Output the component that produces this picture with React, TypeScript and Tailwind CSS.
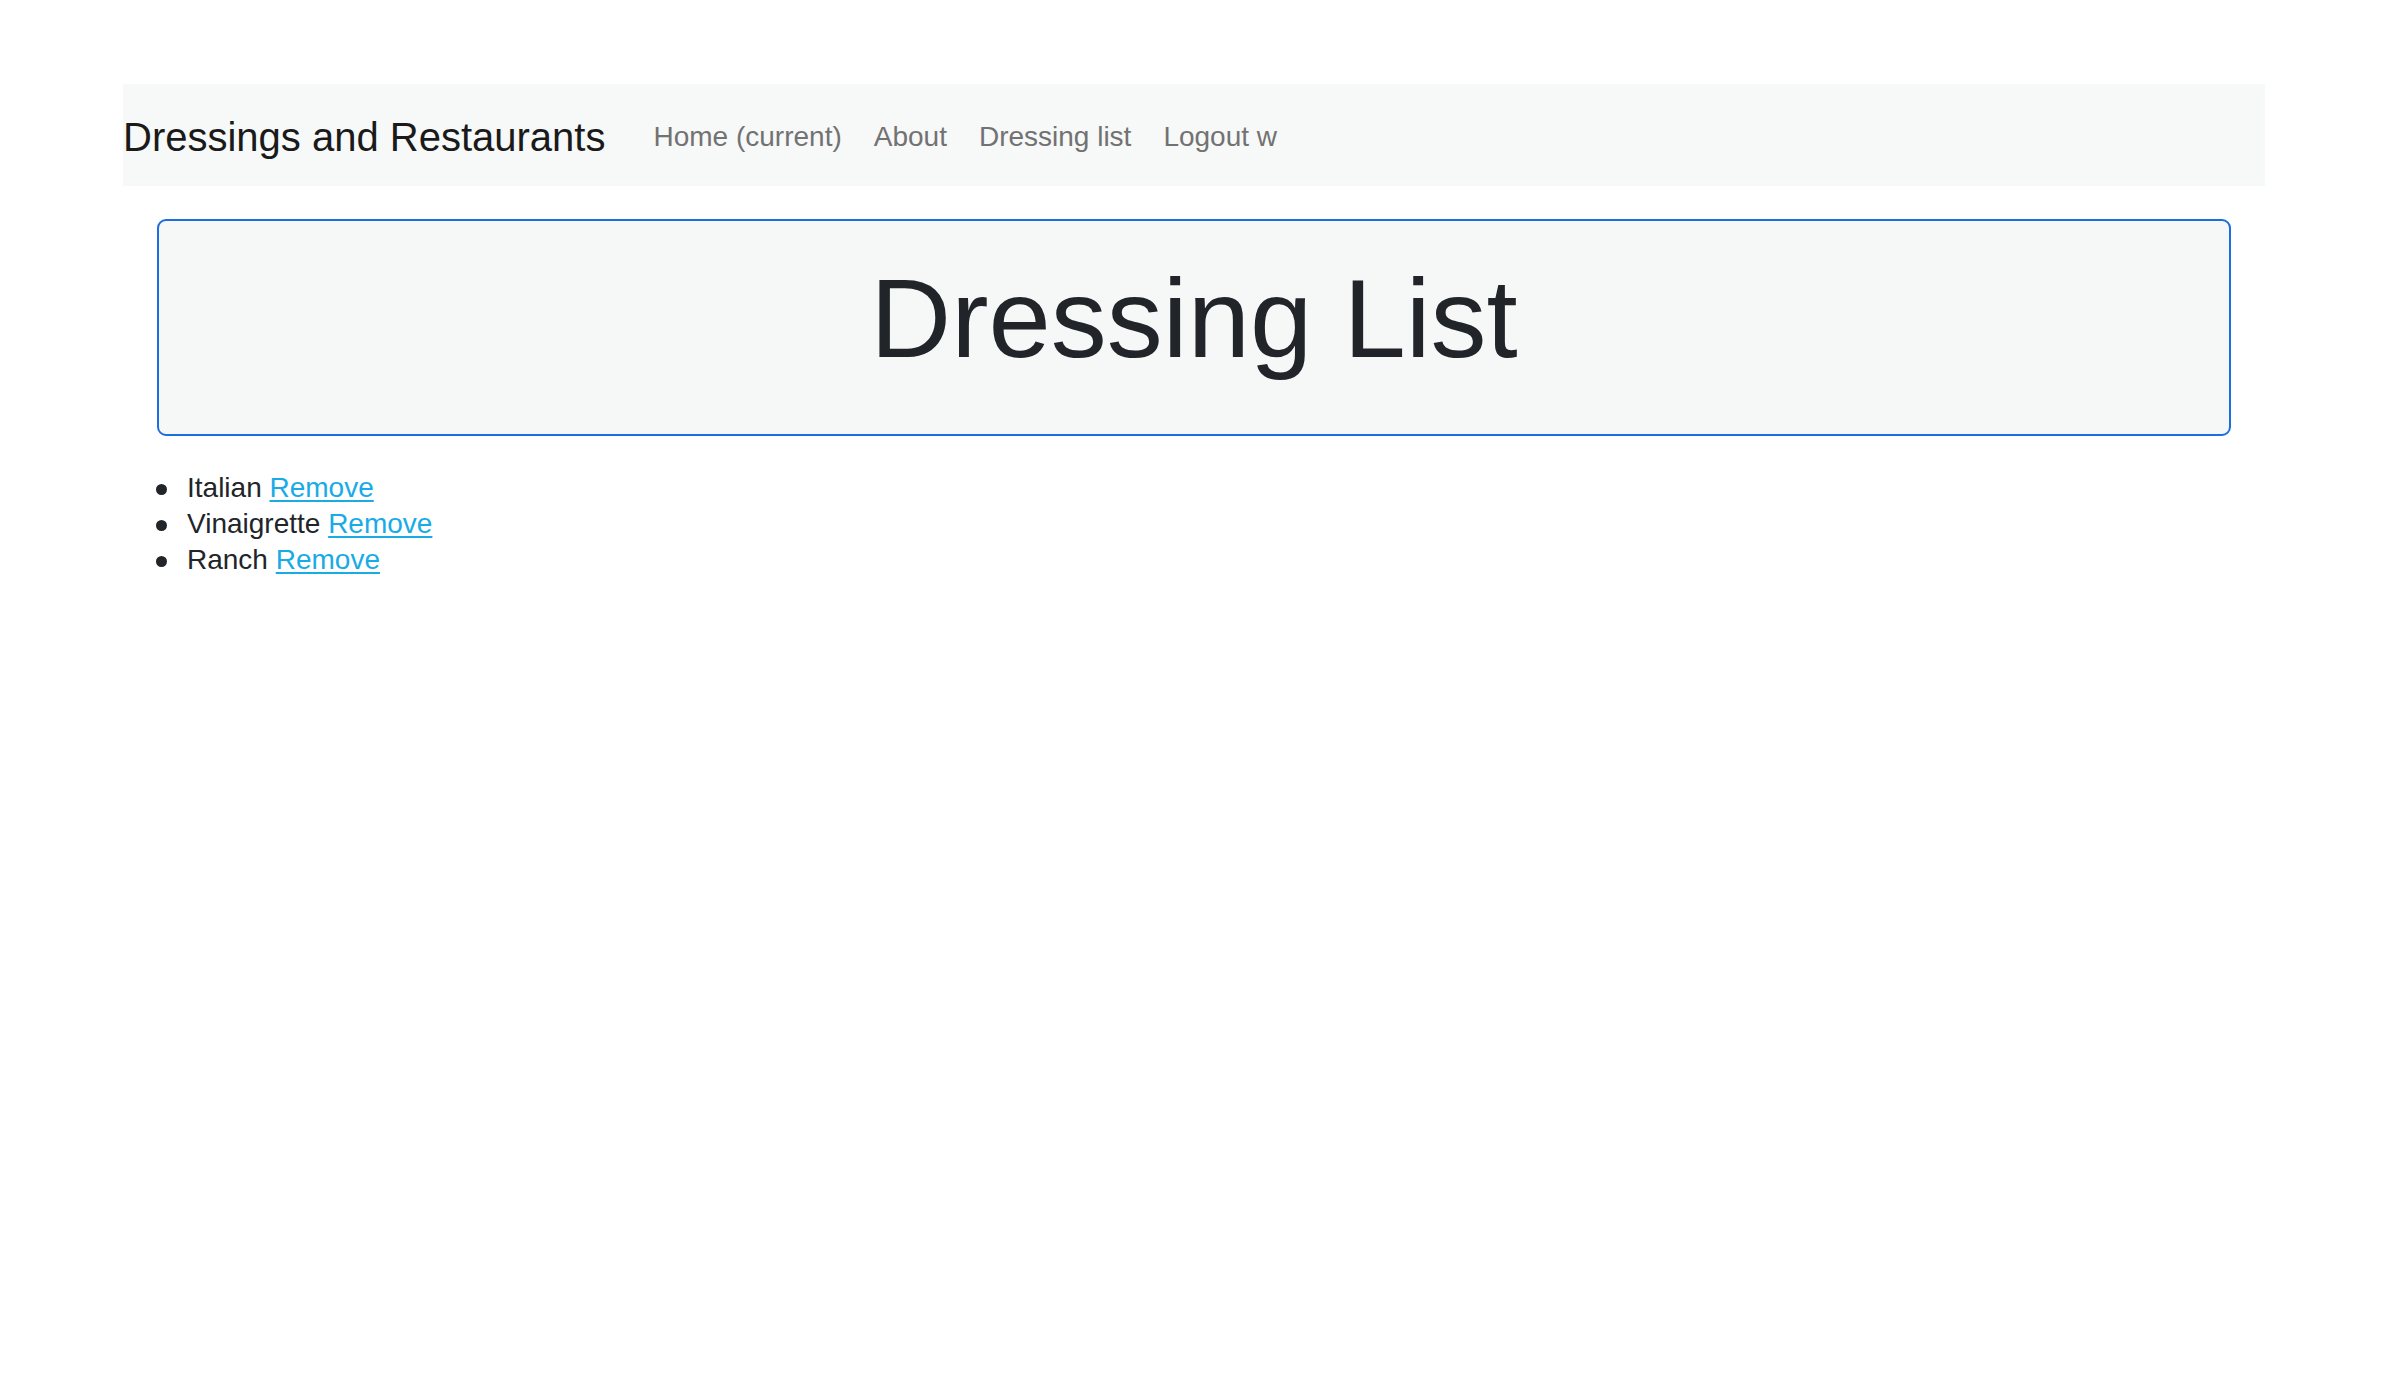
const dressings = ["Italian", "Vinaigrette", "Ranch"];

const navLinks = ["Home (current)", "About", "Dressing list", "Logout w"];

function App() {
  return (
    <main className="min-h-screen bg-white font-['Liberation_Sans',Arial,sans-serif] text-[#212529]">
      <div className="px-[123px] pt-[84px]">
        <nav className="flex h-[102px] items-center bg-[#f7f8f8] pt-[3px]">
          <a className="mr-[32px] text-[40px] leading-[60px] whitespace-nowrap text-[#1a1a1a]">
            Dressings and Restaurants
          </a>
          <ul className="flex text-[28px] leading-[42px] text-[#727272]">
            {navLinks.map((link) => (
              <li key={link} className="px-[16px] whitespace-nowrap">
                {link}
              </li>
            ))}
          </ul>
        </nav>

        <section className="mx-[34px] mt-[33px] flex h-[217px] justify-center rounded-[9px] border-[2.5px] border-[#1c6ee0] bg-[#f6f8f8] pt-[31px]">
          <h1 className="text-[112px] leading-[134px] font-light text-[#212529]">
            Dressing List
          </h1>
        </section>

        <ul className="mt-[34px] pl-[33px] text-[28px] leading-[36px]">
          {dressings.map((name) => (
            <li key={name} className="flex items-start">
              <span className="mt-[14px] h-[11px] w-[11px] shrink-0 rounded-full bg-[#212529]" />
              <span className="ml-[20px]">
                {name}{" "}
                <a className="text-[#19abe6] underline underline-offset-[3px]">Remove</a>
              </span>
            </li>
          ))}
        </ul>
      </div>
    </main>
  );
}

export default App;
